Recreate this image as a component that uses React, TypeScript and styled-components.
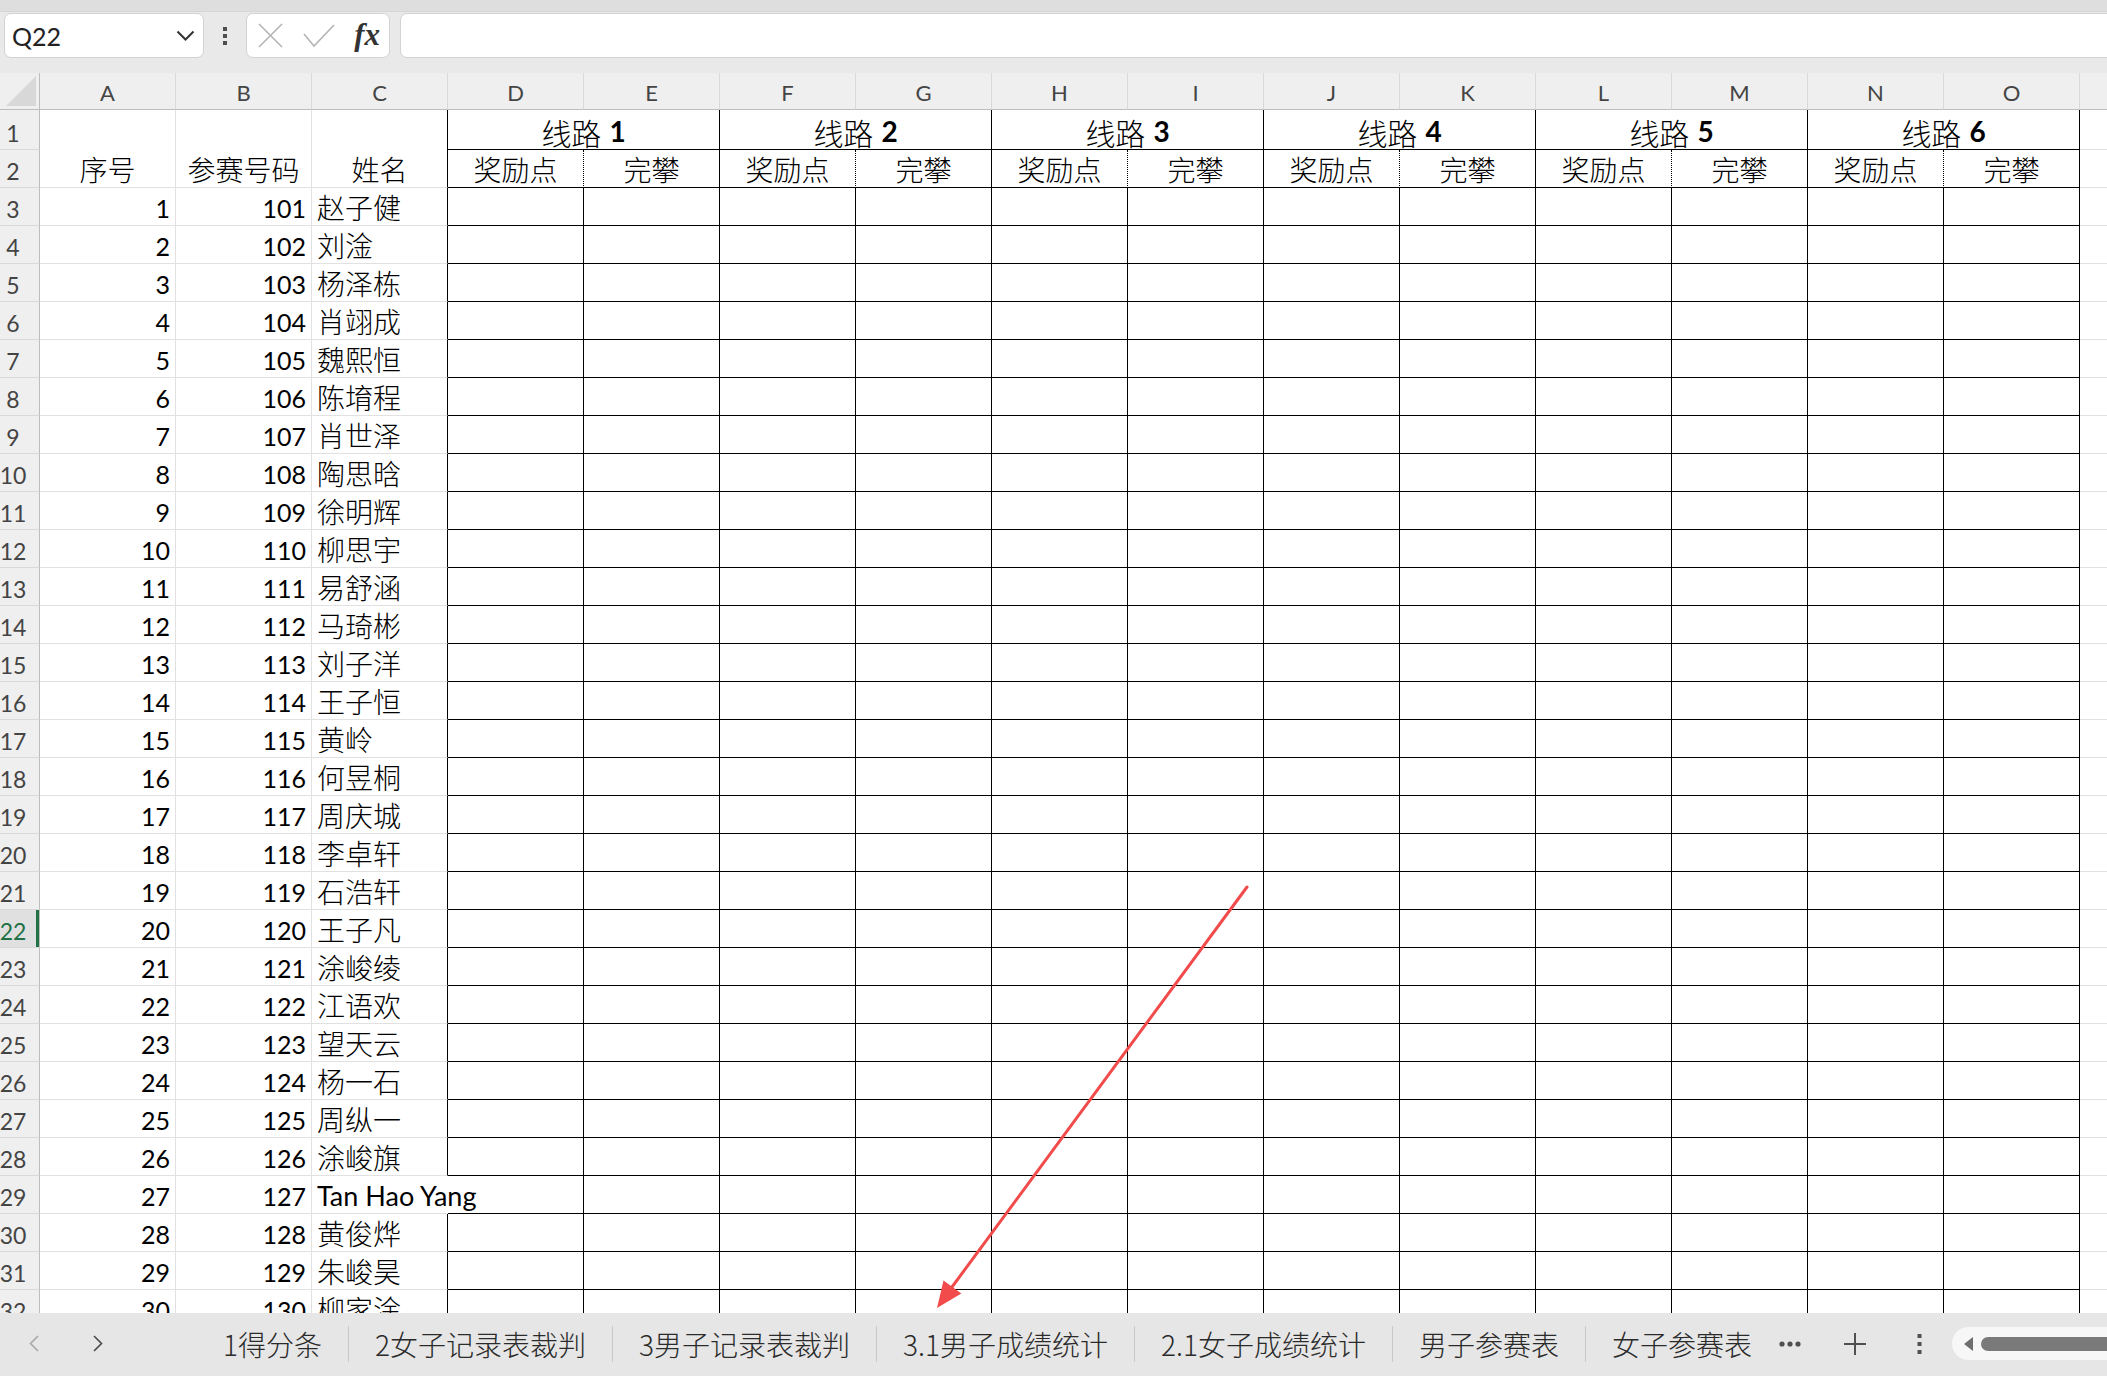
import React from "react"
import styled, { createGlobalStyle, css } from "styled-components"

// Layout constants
const ROW_HEAD_W = 40
const COL_W = 136
const ROW_H = 38
const GRIDLINE = "#e1e1e1"
const HEAD_BG = "#efefef"
const HEAD_LINE = "#bdbdbd"

const GlobalStyle = createGlobalStyle`
    html, body {
        margin: 0;
        padding: 0;
    }

    body {
        overflow: hidden;
        background: #e8e8e8;
        font-family: Lato, "Noto Sans CJK SC", sans-serif;
    }
`

type Edge = "grid" | "solid" | "dotted" | "none"
type Kind = "num" | "cjk" | "latin" | "title"

const edge = (e: Edge = "grid") => {
    if (e === "solid") return "1px solid #000"
    if (e === "dotted") return "1px dotted #000"
    if (e === "none") return "1px solid transparent"
    return `1px solid ${GRIDLINE}`
}

const Window = styled.div`
    position: relative;
    width: 2107px;
    height: 1376px;
    overflow: hidden;

    display: flex;
    flex-flow: column nowrap;
`

/* ---------- formula bar ---------- */

const FormulaBar = styled.div`
    height: 73px;
    flex: none;
    box-sizing: border-box;
    padding: 13px 0 15px 4px;
    background: linear-gradient(#dedede 0 11px, #d6d6d6 11px 12px, #e9e9e9 12px);

    display: flex;
    flex-flow: row nowrap;
    align-items: stretch;
`

const Field = styled.div`
    box-sizing: border-box;
    background: #fff;
    border: 1px solid #d3d3d3;
    border-radius: 7px;

    display: flex;
    flex-flow: row nowrap;
    align-items: center;
`

const NameBox = styled(Field)`
    width: 200px;
    padding: 0 8px 0 7px;
    justify-content: space-between;

    span {
        font-family: Lato, sans-serif;
        font-size: 25px;
        color: #222;
    }
`

const Grip = styled.div`
    width: 42px;

    display: flex;
    flex-flow: column nowrap;
    align-items: center;
    justify-content: center;
    gap: 3px;

    i {
        width: 4px;
        height: 4px;
        background: #4d4d4d;
    }
`

const FxBox = styled(Field)`
    width: 144px;
    padding: 0 9px 0 11px;
    justify-content: space-between;

    span {
        font-family: "Liberation Serif", serif;
        font-style: italic;
        font-weight: 700;
        font-size: 31px;
        color: #333;
        margin-top: -2px;
    }
`

const FormulaInput = styled(Field)`
    flex: 1;
    margin-left: 10px;
    margin-right: -12px;
`

/* ---------- sheet ---------- */

const Sheet = styled.div`
    flex: 1;
    overflow: hidden;
    background: #fff;
`

const Grid = styled.div`
    display: grid;
    grid-template-columns: ${ROW_HEAD_W}px repeat(16, ${COL_W}px);
    grid-template-rows: 37px 40px ${ROW_H}px;
    grid-auto-rows: ${ROW_H}px;
`

const Corner = styled.div`
    box-sizing: border-box;
    background: ${HEAD_BG};
    border-right: 1px solid ${HEAD_LINE};
    border-bottom: 1px solid ${HEAD_LINE};
    padding: 0 3px 3px 0;

    display: flex;
    align-items: flex-end;
    justify-content: flex-end;
`

const CornerMark = styled.div`
    width: 30px;
    height: 30px;
    background: #d8d8d8;
    clip-path: polygon(100% 0, 100% 100%, 0 100%);
`

const ColHeader = styled.div`
    box-sizing: border-box;
    background: ${HEAD_BG};
    border-right: 1px solid #d9d9d9;
    border-bottom: 1px solid ${HEAD_LINE};
    padding-bottom: 5px;
    font-family: Lato, sans-serif;
    font-size: 22px;
    line-height: 1;
    color: #444;

    display: flex;
    align-items: flex-end;
    justify-content: center;
`

const RowHeader = styled.div<{ $active?: boolean }>`
    box-sizing: border-box;
    background: ${HEAD_BG};
    border-right: 1px solid ${HEAD_LINE};
    border-bottom: 1px solid #d9d9d9;
    padding: 0 13px 4px 0;
    font-family: Lato, sans-serif;
    font-size: 23px;
    line-height: 1;
    color: #444;
    white-space: nowrap;

    display: flex;
    align-items: flex-end;
    justify-content: center;

    ${p => p.$active && css`
        background: #e0e0e0;
        color: #1e7145;
        box-shadow: inset -3px 0 0 #217346;
    `}
`

const kindStyles: Record<Kind, ReturnType<typeof css>> = {
    num: css`
        font-family: Lato, sans-serif;
        font-size: 25px;
    `,
    latin: css`
        font-family: Lato, sans-serif;
        font-size: 27px;
    `,
    cjk: css`
        font-family: "Noto Sans CJK SC", sans-serif;
        font-weight: 300;
        font-size: 28px;
    `,
    title: css`
        font-family: "Noto Sans CJK SC", sans-serif;
        font-weight: 300;
        font-size: 30px;
        padding-bottom: 2px;
    `
}

const Cell = styled.div<{
    $right?: Edge
    $bottom?: Edge
    $align?: "left" | "right" | "center"
    $span?: number
    $rows?: number
    $kind?: Kind
}>`
    box-sizing: border-box;
    border-right: ${p => edge(p.$right)};
    border-bottom: ${p => edge(p.$bottom)};
    grid-column: span ${p => p.$span || 1};
    grid-row: span ${p => p.$rows || 1};
    padding: 0 5px 4px;
    line-height: 1;
    color: #000;
    white-space: nowrap;
    overflow: visible;

    display: flex;
    align-items: flex-end;
    justify-content: ${p => p.$align === "right" ? "flex-end" : p.$align === "center" ? "center" : "flex-start"};

    ${p => p.$kind && kindStyles[p.$kind]}
`

const RouteNo = styled.span`
    font-family: Lato, sans-serif;
    font-weight: 700;
    font-size: 28px;
    margin-left: 8px;
    margin-bottom: 2px;
`

/* ---------- sheet tabs ---------- */

const TabBar = styled.div`
    height: 63px;
    flex: none;
    background: #e6e6e6;
    padding-left: 2px;
    padding-bottom: 2px;
    box-sizing: border-box;

    display: flex;
    flex-flow: row nowrap;
    align-items: center;
`

const NavButton = styled.div`
    width: 64px;
    display: flex;
    justify-content: center;
`

const Tabs = styled.div`
    margin-left: 67px;

    display: flex;
    flex-flow: row nowrap;
    align-items: center;
`

const Tab = styled.div`
    padding: 0 26px;
    font-family: "Noto Sans CJK SC", sans-serif;
    font-weight: 300;
    font-size: 28px;
    color: #2b2b2b;
    white-space: nowrap;
`

const TabDivider = styled.div`
    width: 1px;
    height: 36px;
    background: #c9c9c9;
`

const IconButton = styled.div<{ $gap?: number }>`
    width: 24px;
    margin-left: ${p => p.$gap || 0}px;

    display: flex;
    justify-content: center;
    align-items: center;
`

const ScrollTrack = styled.div`
    flex: 1;
    height: 33px;
    margin-left: 20px;
    margin-right: -40px;
    border-radius: 17px;
    background: #f7f7f7;
    padding-left: 12px;

    display: flex;
    flex-flow: row nowrap;
    align-items: center;
    gap: 8px;
`

const ScrollThumb = styled.div`
    flex: 1;
    height: 14px;
    border-radius: 7px;
    background: #7a7a7a;
`

const Annotation = styled.svg`
    position: absolute;
    left: 0;
    top: 0;
    pointer-events: none;
`

/* ---------- data ---------- */

const columns = "ABCDEFGHIJKLMNOP".split("")
const routes = [1, 2, 3, 4, 5, 6]
const names = [
    "赵子健", "刘淦", "杨泽栋", "肖翊成", "魏熙恒", "陈堉程", "肖世泽", "陶思晗", "徐明辉", "柳思宇",
    "易舒涵", "马琦彬", "刘子洋", "王子恒", "黄岭", "何昱桐", "周庆城", "李卓轩", "石浩轩", "王子凡",
    "涂峻绫", "江语欢", "望天云", "杨一石", "周纵一", "涂峻旗", "Tan Hao Yang", "黄俊烨", "朱峻昊", "柳家淦"
]
const sheets = ["1得分条", "2女子记录表裁判", "3男子记录表裁判", "3.1男子成绩统计", "2.1女子成绩统计", "男子参赛表", "女子参赛表"]
const ACTIVE_ROW = 22

const Chevron = ({ dir, color }: { dir: "left" | "right" | "down"; color: string }) => {
    if (dir === "down") {
        return (
            <svg width="19" height="11" viewBox="0 0 19 11">
                <path d="M1.5 1.5 L9.5 9.5 L17.5 1.5" fill="none" stroke={color} strokeWidth="2" />
            </svg>
        )
    }
    return (
        <svg width="12" height="17" viewBox="0 0 12 17">
            <path d={dir === "left" ? "M10 1 L2.5 8.5 L10 16" : "M2 1 L9.5 8.5 L2 16"} fill="none" stroke={color} strokeWidth="1.6" />
        </svg>
    )
}

export default function App() {
    return (
        <>
            <GlobalStyle />
            <Window>
                <FormulaBar>
                    <NameBox>
                        <span>Q22</span>
                        <Chevron dir="down" color="#333" />
                    </NameBox>
                    <Grip><i /><i /><i /></Grip>
                    <FxBox>
                        <svg width="25" height="25" viewBox="0 0 25 25">
                            <path d="M1 1 L24 24 M24 1 L1 24" stroke="#b4b4b4" strokeWidth="1.6" fill="none" />
                        </svg>
                        <svg width="32" height="24" viewBox="0 0 32 24">
                            <path d="M1 10 L11 22 L31 1" stroke="#b4b4b4" strokeWidth="1.6" fill="none" />
                        </svg>
                        <span>fx</span>
                    </FxBox>
                    <FormulaInput />
                </FormulaBar>

                <Sheet>
                    <Grid>
                        <Corner><CornerMark /></Corner>
                        {columns.map(c => <ColHeader key={c}>{c}</ColHeader>)}

                        {/* header rows 1 and 2 */}
                        <RowHeader>1</RowHeader>
                        <Cell $rows={2} $align="center" $kind="cjk">序号</Cell>
                        <Cell $rows={2} $align="center" $kind="cjk">参赛号码</Cell>
                        <Cell $rows={2} $align="center" $kind="cjk" $right="solid">姓名</Cell>
                        {routes.map(n => (
                            <Cell key={n} $span={2} $right="solid" $bottom="solid" $align="center" $kind="title">
                                线路<RouteNo>{n}</RouteNo>
                            </Cell>
                        ))}
                        <Cell />

                        <RowHeader>2</RowHeader>
                        {routes.map(n => (
                            <React.Fragment key={n}>
                                <Cell $right="dotted" $bottom="solid" $align="center" $kind="cjk">奖励点</Cell>
                                <Cell $right="solid" $bottom="solid" $align="center" $kind="cjk">完攀</Cell>
                            </React.Fragment>
                        ))}
                        <Cell />

                        {/* competitor rows */}
                        {names.map((name, i) => {
                            const row = i + 3
                            const latin = /^[A-Za-z ]+$/.test(name)
                            return (
                                <React.Fragment key={row}>
                                    <RowHeader $active={row === ACTIVE_ROW}>{row}</RowHeader>
                                    <Cell $align="right" $kind="num">{i + 1}</Cell>
                                    <Cell $align="right" $kind="num">{101 + i}</Cell>
                                    <Cell $kind={latin ? "latin" : "cjk"} $right={latin ? "none" : "solid"}>{name}</Cell>
                                    {Array.from({ length: 12 }, (_, c) => (
                                        <Cell key={c} $right="solid" $bottom="solid" />
                                    ))}
                                    <Cell />
                                </React.Fragment>
                            )
                        })}
                    </Grid>
                </Sheet>

                <TabBar>
                    <NavButton><Chevron dir="left" color="#a8a8a8" /></NavButton>
                    <NavButton><Chevron dir="right" color="#4a4a4a" /></NavButton>
                    <Tabs>
                        {sheets.map((s, i) => (
                            <React.Fragment key={s}>
                                {i > 0 && <TabDivider />}
                                <Tab>{s}</Tab>
                            </React.Fragment>
                        ))}
                    </Tabs>
                    <IconButton>
                        <svg width="22" height="6" viewBox="0 0 22 6">
                            <circle cx="3" cy="3" r="2.6" fill="#505050" />
                            <circle cx="11" cy="3" r="2.6" fill="#505050" />
                            <circle cx="19" cy="3" r="2.6" fill="#505050" />
                        </svg>
                    </IconButton>
                    <IconButton $gap={41}>
                        <svg width="22" height="22" viewBox="0 0 22 22">
                            <path d="M11 0 V22 M0 11 H22" stroke="#505050" strokeWidth="2" />
                        </svg>
                    </IconButton>
                    <IconButton $gap={41}>
                        <svg width="5" height="20" viewBox="0 0 5 20">
                            <rect x="0.5" y="0" width="4" height="4" fill="#505050" />
                            <rect x="0.5" y="8" width="4" height="4" fill="#505050" />
                            <rect x="0.5" y="16" width="4" height="4" fill="#505050" />
                        </svg>
                    </IconButton>
                    <ScrollTrack>
                        <svg width="9" height="14" viewBox="0 0 9 14">
                            <path d="M9 0 V14 L0 7 Z" fill="#6e6e6e" />
                        </svg>
                        <ScrollThumb />
                    </ScrollTrack>
                </TabBar>

                <Annotation width="2107" height="1376" viewBox="0 0 2107 1376">
                    <line x1="1247" y1="887" x2="952" y2="1287" stroke="#f14b4b" strokeWidth="3" strokeLinecap="round" />
                    <polygon points="937,1308 961.3,1293.6 943.5,1280.6" fill="#f14b4b" />
                </Annotation>
            </Window>
        </>
    )
}
